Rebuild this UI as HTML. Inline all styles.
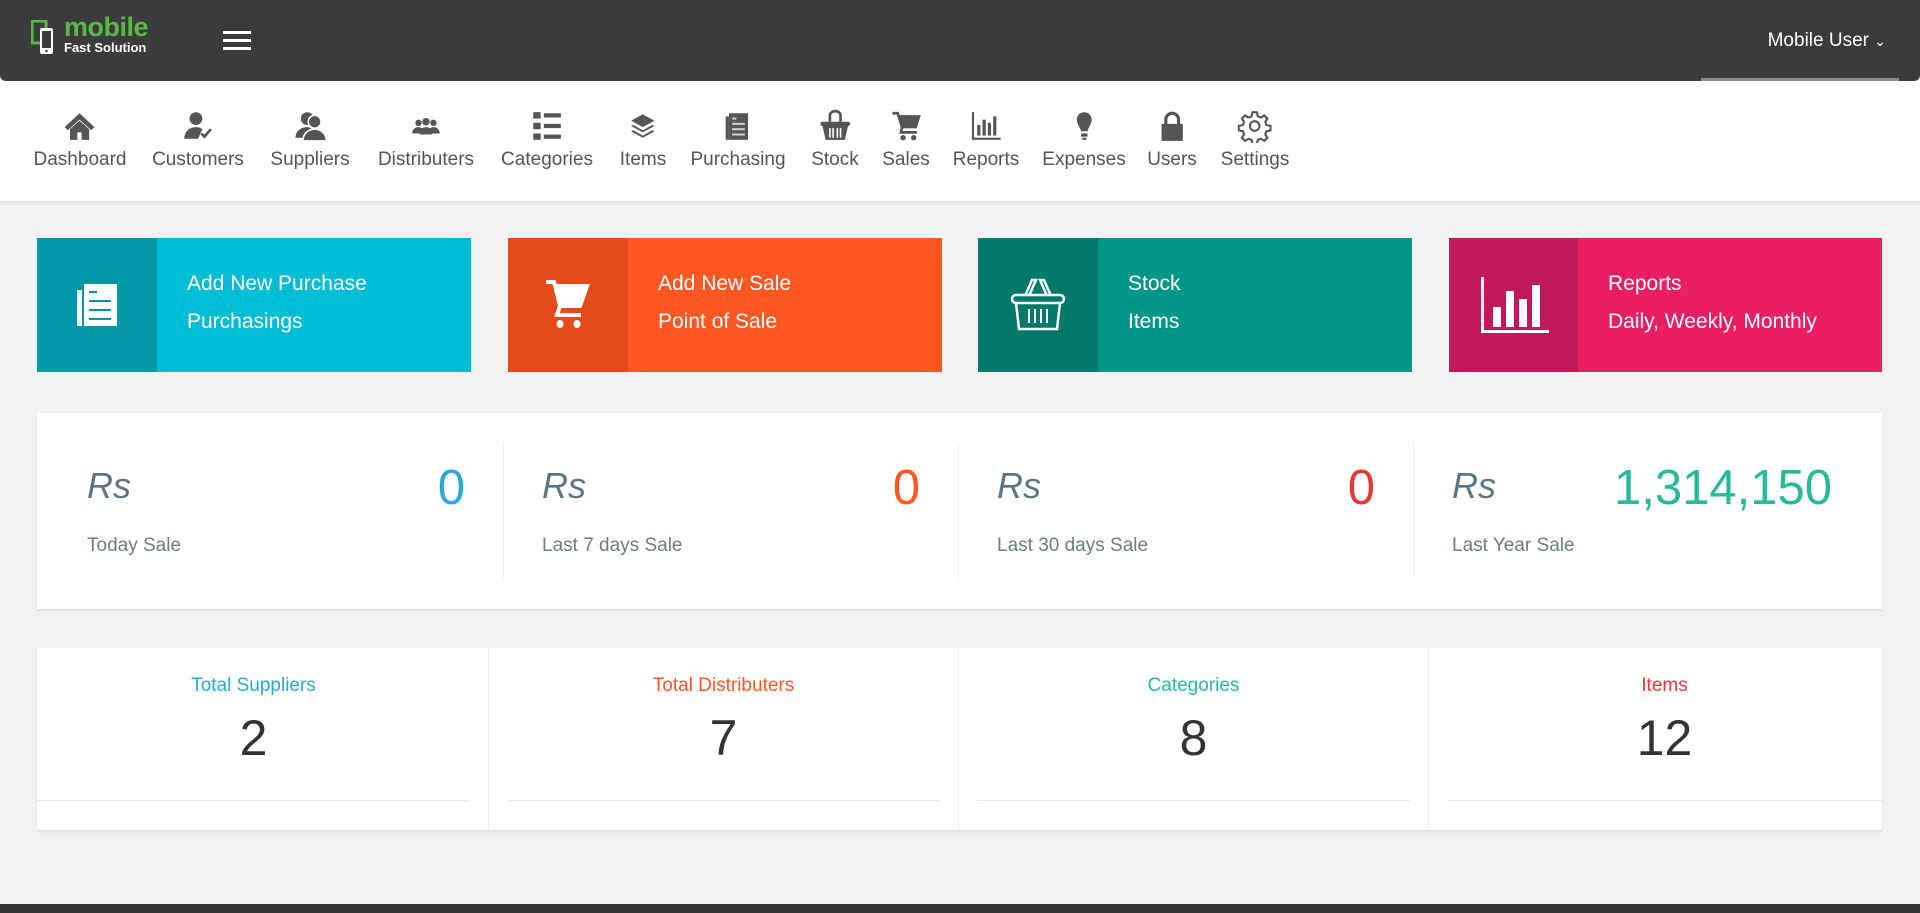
<!DOCTYPE html>
<html><head><meta charset="utf-8"><style>
*{box-sizing:border-box;margin:0;padding:0}
body{width:1920px;height:913px;background:#f2f2f2;font-family:"Liberation Sans",sans-serif;position:relative;overflow:hidden}
.hdr{position:absolute;left:0;top:0;width:1920px;height:81px;background:#3b3b3d;border-radius:0 0 6px 6px}
.nav{position:absolute;left:0;top:81px;width:1920px;height:120px;background:#fff;box-shadow:0 2px 3px rgba(0,0,0,.08)}
.ni{position:absolute;top:28px;transform:translateX(-50%);text-align:center;color:#555;font-size:19px;white-space:nowrap}
.ni svg{display:block;margin:0 auto 6px;width:34px;height:34px}
.card{position:absolute;top:238px;height:134px;color:#fff;font-size:21px}
.card .ic{position:absolute;left:0;top:0;height:134px;display:flex;align-items:center;justify-content:center}
.card .t{position:absolute;top:27px;line-height:38px}
.panel{position:absolute;left:37px;width:1845px;background:#fff;box-shadow:0 2px 2px rgba(0,0,0,.08)}
.st{position:absolute;top:0;height:100%}
.rs{position:absolute;left:50px;top:52px;font-size:36px;font-style:italic;color:#5d7484}
.num{position:absolute;right:38px;top:44px;font-size:49px;font-weight:300}
.lbl{position:absolute;left:50px;top:122px;font-size:19px;color:#6f7b85}
.bc{position:absolute;top:0;height:182px;text-align:center}
.bc .h{margin-top:27px;font-size:19px}
.bc .n{margin-top:12px;font-size:50px;color:#333;font-weight:300}
.bc .ln{position:absolute;left:18px;right:18px;top:152px;border-top:1px solid #e6e6e6}
</style></head><body>
<div class="hdr">
 <svg style="position:absolute;left:31px;top:20px" width="28" height="36" viewBox="0 0 28 36"><rect x="1" y="1" width="14" height="22" fill="none" stroke="#5ab946" stroke-width="3"/><rect x="9" y="8" width="13" height="26" rx="2" fill="#fff"/><rect x="11" y="11" width="9" height="17" fill="#3b3b3d"/><circle cx="15.5" cy="31" r="1.2" fill="#3b3b3d"/></svg>
 <div style="position:absolute;left:64px;top:12px;color:#5ab946;font-size:27px;font-weight:bold;letter-spacing:-.5px">mobile</div>
 <div style="position:absolute;left:64px;top:40px;color:#fff;font-size:13px;font-weight:bold">Fast Solution</div>
 <div style="position:absolute;left:223px;top:31px;width:28px;height:3px;background:#fff;box-shadow:0 8px 0 #fff,0 16px 0 #fff"></div>
 <div style="position:absolute;right:34px;top:30px;color:#fff;font-size:19px">Mobile User <span style="font-size:14px">&#8964;</span></div>
</div>
<div style="position:absolute;left:1701px;top:78px;width:198px;height:6px;background:#8d8d8d"></div>
<div class="nav">
 <div class="ni" style="left:80px"><svg viewBox="0 0 32 32"><path d="M16 4 2 17l3 3 11-10 11 10 3-3z M7 19v10h7v-7h4v7h7V19L16 11z" fill="#555"/></svg>Dashboard</div>
 <div class="ni" style="left:198px"><svg viewBox="0 0 32 32"><circle cx="14" cy="9" r="6" fill="#555"/><path d="M3 28c0-7 5-11 11-11 3 0 5 1 6 2l-4 9z" fill="#555"/><path d="M19 23l3 3 6-7" stroke="#555" stroke-width="2.5" fill="none"/></svg>Customers</div>
 <div class="ni" style="left:310px"><svg viewBox="0 0 32 32"><circle cx="13" cy="9" r="6" fill="#555"/><path d="M2 27c0-6 5-10 11-10 2 0 3 1 4 1-3 2-5 5-5 9z" fill="#555"/><circle cx="20" cy="12" r="6" fill="#555" stroke="#fff" stroke-width="1.5"/><path d="M9 30c0-7 5-11 11-11s11 4 11 11z" fill="#555" stroke="#fff" stroke-width="1.5"/></svg>Suppliers</div>
 <div class="ni" style="left:426px"><svg viewBox="0 0 32 32"><g fill="#555"><circle cx="9" cy="13" r="3"/><circle cx="23" cy="13" r="3"/><circle cx="16" cy="12" r="3.5"/><path d="M3 23c0-4 3-6 6-6s5 2 5 6zM18 23c0-4 2-6 5-6s6 2 6 6zM10 24c0-5 3-7 6-7s6 2 6 7z"/></g></svg>Distributers</div>
 <div class="ni" style="left:547px"><svg viewBox="0 0 32 32"><g fill="#555"><rect x="3" y="3" width="7" height="6"/><rect x="13" y="4" width="16" height="4"/><rect x="3" y="13" width="7" height="6"/><rect x="13" y="14" width="16" height="4"/><rect x="3" y="23" width="7" height="6"/><rect x="13" y="24" width="16" height="4"/></g></svg>Categories</div>
 <div class="ni" style="left:643px"><svg viewBox="0 0 32 32"><g fill="#555"><path d="M16 5 5 11l11 6 11-6z"/><path d="M5 16l11 6 11-6-2-1-9 5-9-5z"/><path d="M5 21l11 6 11-6-2-1-9 5-9-5z"/></g></svg>Items</div>
 <div class="ni" style="left:738px"><svg viewBox="0 0 32 32"><rect x="7" y="4" width="18" height="25" fill="#555"/><rect x="4" y="7" width="3" height="22" fill="#555"/><g fill="#ccc"><rect x="10" y="8" width="4" height="2"/><rect x="10" y="13" width="12" height="2"/><rect x="10" y="18" width="12" height="2"/><rect x="10" y="23" width="12" height="2"/></g></svg>Purchasing</div>
 <div class="ni" style="left:835px"><svg viewBox="0 0 32 32"><path d="M11 12V6a5 4 0 0 1 10 0v6" stroke="#555" stroke-width="2.5" fill="none"/><rect x="2" y="12" width="28" height="4" rx="2" fill="#555"/><path d="M4 16h24l-3 13H7z" fill="#555"/><g stroke="#fff" stroke-width="1.5"><path d="M11 18v9M14 18v9M18 18v9M21 18v9"/></g></svg>Stock</div>
 <div class="ni" style="left:906px"><svg viewBox="0 0 32 32"><path d="M3 4h5l4 13h13l3-10H10" fill="none" stroke="#555" stroke-width="2.5"/><path d="M10 7h18l-3 10H12z" fill="#555"/><path d="M12 17l-1 5h15" stroke="#555" stroke-width="2.5" fill="none"/><circle cx="13" cy="27" r="2.5" fill="#555"/><circle cx="23" cy="27" r="2.5" fill="#555"/></svg>Sales</div>
 <div class="ni" style="left:986px"><svg viewBox="0 0 32 32"><g fill="#555"><rect x="3" y="3" width="2" height="26"/><rect x="3" y="27" width="27" height="2"/><rect x="8" y="15" width="3" height="10"/><rect x="13" y="10" width="3" height="15"/><rect x="18" y="13" width="3" height="12"/><rect x="23" y="7" width="3" height="18"/></g></svg>Reports</div>
 <div class="ni" style="left:1084px"><svg viewBox="0 0 32 32"><path d="M16 3c-5 0-7 4-7 7 0 4 3 7 4 11h6c1-4 4-7 4-11 0-3-2-7-7-7z" fill="#555"/><rect x="13" y="23" width="6" height="3" fill="#555"/><rect x="14" y="27" width="4" height="2" fill="#555"/></svg>Expenses</div>
 <div class="ni" style="left:1172px"><svg viewBox="0 0 32 32"><path d="M10 15V10a6 6 0 0 1 12 0v5" stroke="#555" stroke-width="3" fill="none"/><rect x="6" y="14" width="20" height="16" fill="#555"/></svg>Users</div>
 <div class="ni" style="left:1255px"><svg viewBox="0 0 32 32"><path d="M14 3h4l1 4 3 1 3-2 3 3-2 3 1 3 4 1v4l-4 1-1 3 2 3-3 3-3-2-3 1-1 4h-4l-1-4-3-1-3 2-3-3 2-3-1-3-4-1v-4l4-1 1-3-2-3 3-3 3 2 3-1z" fill="none" stroke="#555" stroke-width="2"/><circle cx="16" cy="16" r="4.5" fill="none" stroke="#555" stroke-width="2"/></svg>Settings</div>
</div>

<div class="card" style="left:37px;width:434px;background:#00bcd4"><div class="ic" style="width:120px;background:#0097a7"><svg width="48" height="48" viewBox="0 0 48 48"><rect x="11" y="3" width="33" height="42" fill="#fff"/><rect x="4" y="9" width="5" height="36" fill="#fff"/><g fill="#0097a7"><rect x="16" y="10" width="8" height="2"/><rect x="16" y="19" width="22" height="2"/><rect x="16" y="28" width="22" height="2"/><rect x="16" y="37" width="22" height="2"/></g></svg></div><div class="t" style="left:150px">Add New Purchase<br>Purchasings</div></div>
<div class="card" style="left:508px;width:434px;background:#ff5722"><div class="ic" style="width:120px;background:#e64a19"><svg width="50" height="52" viewBox="0 0 50 52"><path d="M3 3h8l6 24h20l7-20H13" fill="none" stroke="#fff" stroke-width="4"/><path d="M13 7h31l-7 20H18z" fill="#fff"/><path d="M17 27l-3 9h24" stroke="#fff" stroke-width="4" fill="none"/><ellipse cx="17" cy="45" rx="3.5" ry="4" fill="#fff"/><ellipse cx="34" cy="45" rx="3.5" ry="4" fill="#fff"/></svg></div><div class="t" style="left:150px">Add New Sale<br>Point of Sale</div></div>
<div class="card" style="left:978px;width:434px;background:#009688"><div class="ic" style="width:120px;background:#00796b"><svg width="58" height="58" viewBox="0 0 58 58"><path d="M16 20 23 4h4l-7 16M42 20 35 4h-4l7 16" stroke="#fff" stroke-width="2.5" fill="none"/><rect x="3" y="19" width="52" height="8" rx="4" fill="none" stroke="#fff" stroke-width="2.5"/><path d="M7 27l3 26h38l3-26" fill="none" stroke="#fff" stroke-width="2.5"/><path d="M20 33v14M26 33v14M32 33v14M38 33v14" stroke="#fff" stroke-width="2"/></svg></div><div class="t" style="left:150px">Stock<br>Items</div></div>
<div class="card" style="left:1449px;width:433px;background:#e91e63"><div class="ic" style="width:129px;background:#c2185b"><svg width="70" height="60" viewBox="0 0 70 60"><rect x="2" y="2" width="3" height="56" fill="#fff"/><rect x="2" y="55" width="68" height="3" fill="#fff"/><rect x="14" y="32" width="8" height="20" fill="#fff"/><rect x="27" y="16" width="8" height="36" fill="#fff"/><rect x="40" y="24" width="8" height="28" fill="#fff"/><rect x="53" y="10" width="8" height="42" fill="#fff"/></svg></div><div class="t" style="left:159px">Reports<br>Daily, Weekly, Monthly</div></div>

<div class="panel" style="top:413px;height:196px">
 <div class="st" style="left:0;width:467px;border-right:1px solid #eee;top:30px;height:136px"><div class="rs" style="top:22px">Rs</div><div class="num" style="top:17px;color:#2aa8d8">0</div><div class="lbl" style="top:92px">Today Sale</div></div>
 <div class="st" style="left:467px;width:455px;border-right:1px solid #eee;top:30px;height:136px"><div class="rs" style="left:38px;top:22px">Rs</div><div class="num" style="top:17px;color:#ff5722">0</div><div class="lbl" style="left:38px;top:92px">Last 7 days Sale</div></div>
 <div class="st" style="left:922px;width:455px;border-right:1px solid #eee;top:30px;height:136px"><div class="rs" style="left:38px;top:22px">Rs</div><div class="num" style="top:17px;color:#e53935">0</div><div class="lbl" style="left:38px;top:92px">Last 30 days Sale</div></div>
 <div class="st" style="left:1377px;width:468px;top:30px;height:136px"><div class="rs" style="left:38px;top:22px">Rs</div><div class="num" style="top:17px;right:50px;color:#26b99a">1,314,150</div><div class="lbl" style="left:38px;top:92px">Last Year Sale</div></div>
</div>

<div class="panel" style="top:648px;height:182px">
 <div class="bc" style="left:0;width:452px;border-right:1px solid #eee;padding-right:18px"><div class="h" style="color:#2aa8d8">Total Suppliers</div><div class="n">2</div><div class="ln" style="left:0"></div></div>
 <div class="bc" style="left:452px;width:470px;border-right:1px solid #eee"><div class="h" style="color:#ff5722">Total Distributers</div><div class="n">7</div><div class="ln"></div></div>
 <div class="bc" style="left:922px;width:470px;border-right:1px solid #eee"><div class="h" style="color:#26b99a">Categories</div><div class="n">8</div><div class="ln"></div></div>
 <div class="bc" style="left:1392px;width:453px;padding-left:18px"><div class="h" style="color:#e53935">Items</div><div class="n">12</div><div class="ln" style="right:0"></div></div>
</div>
<div style="position:absolute;left:0;top:904px;width:1920px;height:9px;background:#333"></div>
</body></html>
